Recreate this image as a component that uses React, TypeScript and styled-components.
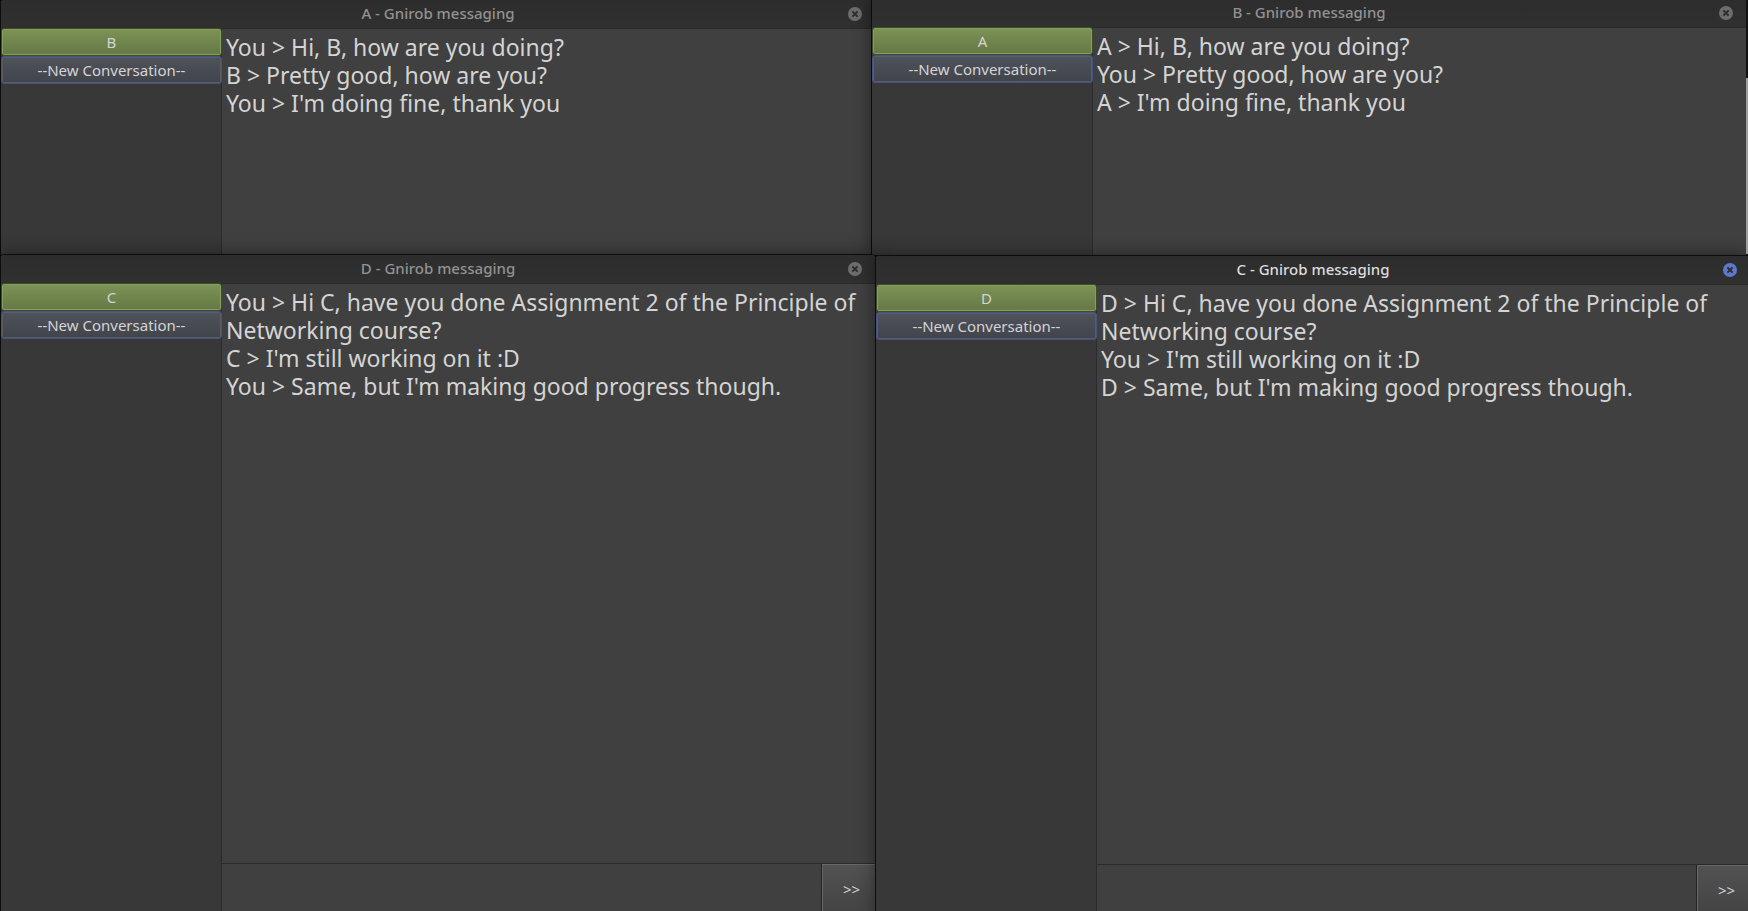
import React from 'react';
import styled, { createGlobalStyle } from 'styled-components';

const GlobalStyle = createGlobalStyle`
  *, *::before, *::after { box-sizing: border-box; }
  body {
    margin: 0;
    background: #111;
    font-family: 'Noto Sans', 'Open Sans', sans-serif;
  }
`;

const Desktop = styled.main`
  display: flex;
  flex-direction: column;
  height: 100vh;
  overflow: hidden;
`;

const Row = styled.div<{ $fill?: boolean }>`
  display: flex;
  min-height: 0;
  flex: ${(p) => (p.$fill ? '1 1 0' : '0 0 254px')};
`;

const Frame = styled.section<{ $shift: number; $overlap: number }>`
  display: flex;
  flex-direction: column;
  flex: 0 0 calc(50% + 1px);
  min-width: 0;
  isolation: isolate;
  margin: ${(p) => p.$shift}px 0 ${(p) => -4 - p.$shift}px ${(p) => -p.$overlap}px;
  border: 1px solid #0c0c0c;
  border-right: 0;
  border-radius: 4px 4px 0 0;
  background: #404040;
  box-shadow: 0 0 18px rgba(0, 0, 0, 0.45);
`;

const TitleBar = styled.header`
  display: grid;
  grid-template-columns: 27px 1fr 27px;
  align-items: center;
  flex: none;
  height: 28px;
  border-radius: 3px 3px 0 0;
  background: linear-gradient(#2d2d2d, #303030);
`;

const Title = styled.h2<{ $active?: boolean }>`
  grid-column: 2;
  align-self: start;
  margin: 0;
  color: ${(p) => (p.$active ? '#dcdcdc' : '#929292')};
  font-size: 15px;
  font-weight: 500;
  line-height: 26px;
  text-align: center;
`;

const CloseButton = styled.button<{ $active?: boolean }>`
  width: 14px;
  height: 14px;
  padding: 0;
  border: 0;
  border-radius: 50%;
  background: ${(p) => (p.$active ? '#5f78cc' : '#6b6d70')};
  color: #2d2d2d;

  svg { display: block; }
`;

const Body = styled.div`
  display: flex;
  flex: 1;
  min-height: 0;
`;

const Sidebar = styled.nav`
  display: flex;
  flex-direction: column;
  flex: none;
  width: 221px;
  border-right: 1px solid #2b2b2b;
  background: #383838;
`;

const SidebarButton = styled.button<{ $create?: boolean }>`
  height: 28px;
  margin-right: -1px;
  padding: 0;
  border: 1px solid ${(p) => (p.$create ? '#44528a' : '#3f4c28')};
  border-radius: 3px;
  background: ${(p) =>
    p.$create ? 'linear-gradient(#50525c, #42444b)' : 'linear-gradient(#7c9356, #667846)'};
  box-shadow: inset 0 0 0 1px ${(p) => (p.$create ? '#5b5d65' : '#84a05a')};
  color: #d4d4d4;
  font: 400 15px/20px 'Noto Sans', sans-serif;
`;

const Conversation = styled.div`
  display: flex;
  flex-direction: column;
  flex: 1;
  min-width: 0;
  border-top: 1px solid #2a2a2a;
`;

const Messages = styled.div`
  flex: 1;
  padding: 4px 4px 0;
  color: #d4d4d4;
  font-size: 23px;
  line-height: 28px;
`;

const Message = styled.p`
  margin: 0;
`;

const Composer = styled.form`
  display: flex;
  flex: none;
  height: 51px;
  border-top: 1px solid #2a2a2a;
`;

const MessageInput = styled.input`
  flex: 1;
  min-width: 0;
  padding: 0 8px;
  border: 0;
  outline: 0;
  background: #404040;
  color: #d4d4d4;
  font: 400 15px/20px 'Noto Sans', sans-serif;
`;

const SendButton = styled.button`
  width: 54px;
  padding: 0 0 0 6px;
  border: 0;
  border-left: 1px solid #242424;
  background: linear-gradient(#525252, #434343);
  box-shadow: inset 1px 1px 0 #686868;
  color: #d4d4d4;
  font: 400 15px/20px 'Noto Sans', sans-serif;
`;

const DesktopEdge = styled.div`
  flex: 1;
  background: linear-gradient(#161616 78px, #c8c8c8 78px);
`;

type ChatProps = {
  user: string;
  peer: string;
  messages: string[];
  active?: boolean;
  composer?: boolean;
  shift?: number;
  overlap?: number;
};

function ChatWindow({ user, peer, messages, active, composer, shift = 0, overlap = 0 }: ChatProps) {
  return (
    <Frame $shift={shift} $overlap={overlap}>
      <TitleBar>
        <Title $active={active}>{user} - Gnirob messaging</Title>
        <CloseButton type="button" aria-label="Close window" $active={active}>
          <svg width="14" height="14" viewBox="0 0 14 14" fill="none" stroke="currentColor" strokeWidth="2">
            <path d="M4.4 4.4l5.2 5.2M9.6 4.4L4.4 9.6" />
          </svg>
        </CloseButton>
      </TitleBar>
      <Body>
        <Sidebar aria-label="Conversations">
          <SidebarButton type="button">{peer}</SidebarButton>
          <SidebarButton type="button" $create>--New Conversation--</SidebarButton>
        </Sidebar>
        <Conversation>
          <Messages>
            {messages.map((text) => (
              <Message key={text}>{text}</Message>
            ))}
          </Messages>
          {composer && (
            <Composer onSubmit={(event) => event.preventDefault()}>
              <MessageInput type="text" aria-label="Message" />
              <SendButton type="submit" aria-label="Send">&gt;&gt;</SendButton>
            </Composer>
          )}
        </Conversation>
      </Body>
    </Frame>
  );
}

export default function App() {
  return (
    <>
      <GlobalStyle />
      <Desktop>
        <Row>
          <ChatWindow
            user="A"
            peer="B"
            shift={-1}
            messages={[
              'You > Hi, B, how are you doing?',
              'B > Pretty good, how are you?',
              "You > I'm doing fine, thank you",
            ]}
          />
          <ChatWindow
            user="B"
            peer="A"
            shift={-2}
            overlap={4}
            messages={[
              'A > Hi, B, how are you doing?',
              'You > Pretty good, how are you?',
              "A > I'm doing fine, thank you",
            ]}
          />
          <DesktopEdge />
        </Row>
        <Row $fill>
          <ChatWindow
            user="D"
            peer="C"
            composer
            messages={[
              'You > Hi C, have you done Assignment 2 of the Principle of Networking course?',
              "C > I'm still working on it :D",
              "You > Same, but I'm making good progress though.",
            ]}
          />
          <ChatWindow
            user="C"
            peer="D"
            active
            composer
            shift={1}
            messages={[
              'D > Hi C, have you done Assignment 2 of the Principle of Networking course?',
              "You > I'm still working on it :D",
              "D > Same, but I'm making good progress though.",
            ]}
          />
        </Row>
      </Desktop>
    </>
  );
}
